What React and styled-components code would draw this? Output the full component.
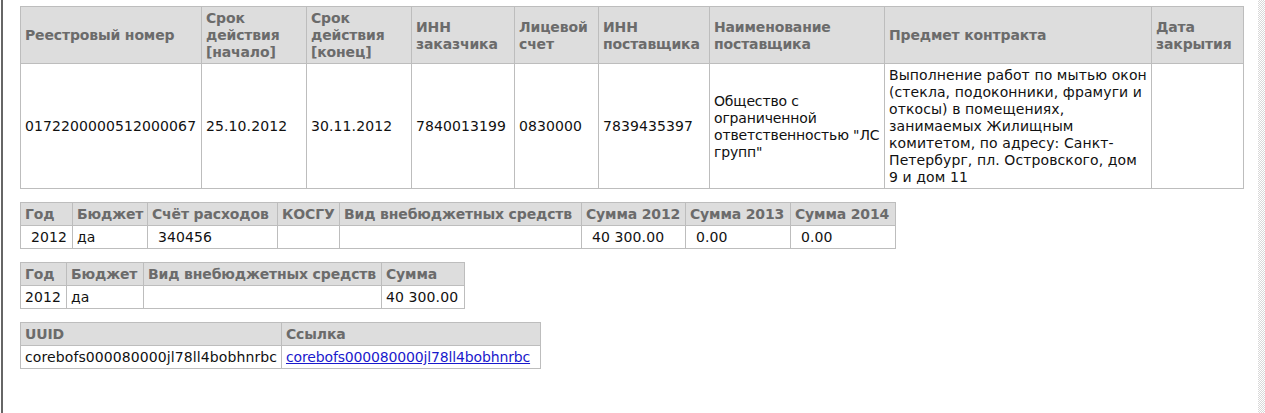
import styled, { createGlobalStyle } from "styled-components";

const GlobalStyle = createGlobalStyle`
    html, body {
        margin: 0;
        padding: 0;
        background: #ffffff;
    }
    body {
        font-family: "DejaVu Sans", Verdana, sans-serif;
        font-size: 14px;
        color: #111111;
    }
`

// long cells keep the same line breaks as the original page
const contract = {
    head: [
        "Реестровый номер",
        "Срок действия [начало]",
        "Срок действия [конец]",
        "ИНН заказчика",
        "Лицевой счет",
        "ИНН поставщика",
        "Наименование поставщика",
        "Предмет контракта",
        "Дата закрытия",
    ],
    widths: [181, 105, 105, 103, 84, 111, 175, 267, 92],
    row: [
        { lines: ["0172200000512000067"] },
        { lines: ["25.10.2012"] },
        { lines: ["30.11.2012"] },
        { lines: ["7840013199"] },
        { lines: ["0830000"] },
        { lines: ["7839435397"] },
        { lines: ["Общество с", "ограниченной", "ответственностью \"ЛС", "групп\""], tight: true },
        {
            lines: [
                "Выполнение работ по мытью окон",
                "(стекла, подоконники, фрамуги и",
                "откосы) в помещениях,",
                "занимаемых Жилищным",
                "комитетом, по адресу: Санкт-",
                "Петербург, пл. Островского, дом",
                "9 и дом 11",
            ],
        },
        { lines: [] },
    ],
}

const finance = {
    head: ["Год", "Бюджет", "Счёт расходов", "КОСГУ", "Вид внебюджетных средств", "Сумма 2012", "Сумма 2013", "Сумма 2014"],
    widths: [52, 75, 130, 62, 242, 104, 105, 105],
    row: [
        { text: "2012", indent: true },
        { text: "да" },
        { text: "340456", indent: true },
        { text: "" },
        { text: "" },
        { text: "40 300.00", indent: true },
        { text: "0.00", indent: true },
        { text: "0.00", indent: true },
    ],
}

const budget = {
    head: ["Год", "Бюджет", "Вид внебюджетных средств", "Сумма"],
    widths: [46, 77, 238, 83],
    row: [{ text: "2012" }, { text: "да" }, { text: "" }, { text: "40 300.00" }],
}

const uuid = "corebofs000080000jl78ll4bobhnrbc"

function Cols({ widths }) {
    return (
        <colgroup>
            {widths.map((w, i) => <col key={i} style={{ width: w }} />)}
        </colgroup>
    )
}

function App() {
    return (
        <StFrame>
            <GlobalStyle />
            <StContent>
                <StTable $width="100%">
                    <Cols widths={contract.widths} />
                    <thead>
                        <tr>
                            {contract.head.map((h) => <StHead key={h} $wrap>{h}</StHead>)}
                        </tr>
                    </thead>
                    <tbody>
                        <tr>
                            {contract.row.map((c, i) => (
                                <StCell key={i} $tight={c.tight}>
                                    {c.lines.map((l) => <StLine key={l}>{l}</StLine>)}
                                </StCell>
                            ))}
                        </tr>
                    </tbody>
                </StTable>

                <StTable $width="875px">
                    <Cols widths={finance.widths} />
                    <thead>
                        <tr>
                            {finance.head.map((h) => <StHead key={h}>{h}</StHead>)}
                        </tr>
                    </thead>
                    <tbody>
                        <tr>
                            {finance.row.map((c, i) => <StCell key={i} $indent={c.indent}>{c.text}</StCell>)}
                        </tr>
                    </tbody>
                </StTable>

                <StTable $width="444px">
                    <Cols widths={budget.widths} />
                    <thead>
                        <tr>
                            {budget.head.map((h) => <StHead key={h}>{h}</StHead>)}
                        </tr>
                    </thead>
                    <tbody>
                        <tr>
                            {budget.row.map((c, i) => <StCell key={i}>{c.text}</StCell>)}
                        </tr>
                    </tbody>
                </StTable>

                <StTable $width="520px">
                    <Cols widths={[261, 259]} />
                    <thead>
                        <tr>
                            <StHead>UUID</StHead>
                            <StHead>Ссылка</StHead>
                        </tr>
                    </thead>
                    <tbody>
                        <tr>
                            <StCell>{uuid}</StCell>
                            <StCell $tight><StLink href="#">{uuid}</StLink></StCell>
                        </tr>
                    </tbody>
                </StTable>
            </StContent>
            <StScrollStrip />
        </StFrame>
    )
}

export default App;

const StFrame = styled.div`
    display: flex;
    min-height: 413px;
    margin-left: 1px;
    border-left: 2px solid #666666;
`
const StContent = styled.div`
    flex: 1;
    display: flex;
    flex-direction: column;
    align-items: flex-start;
    gap: 13px;
    padding: 6px 14px 0 17px;
`
const StScrollStrip = styled.div`
    width: 8px;
    background-color: #ffffff;
    background-image: repeating-conic-gradient(#d8d8d8 0 25%, #ffffff 0 50%);
    background-size: 2px 2px;
`
const StTable = styled.table`
    width: ${(p) => p.$width};
    table-layout: fixed;
    border-collapse: collapse;
    border: 1px solid #bdbdbd;
`
const StHead = styled.th`
    background: #dddddd;
    color: #6b6b6b;
    font-weight: bold;
    letter-spacing: -0.15px;
    text-align: left;
    vertical-align: middle;
    line-height: 17px;
    padding: 3px 4px 2px;
    border: 1px solid #bdbdbd;
    white-space: ${(p) => (p.$wrap ? "normal" : "nowrap")};
`
const StCell = styled.td`
    color: #111111;
    letter-spacing: ${(p) => (p.$tight ? "-0.15px" : "0.1px")};
    text-align: left;
    vertical-align: middle;
    line-height: 17px;
    padding: 3px 4px 2px ${(p) => (p.$indent ? "10px" : "4px")};
    border: 1px solid #bdbdbd;
    white-space: nowrap;
`
const StLine = styled.span`
    display: block;
`
const StLink = styled.a`
    color: #1a1acc;
    text-decoration: underline;
`
